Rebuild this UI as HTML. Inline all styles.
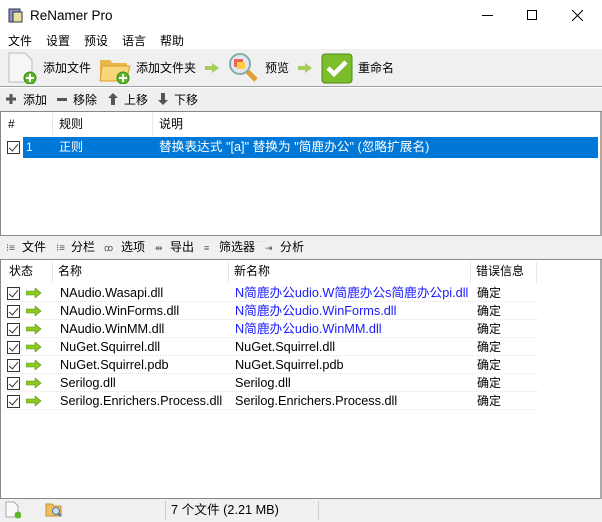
<!DOCTYPE html>
<html><head><meta charset="utf-8"><style>
*{margin:0;padding:0;box-sizing:border-box}
body{width:602px;height:522px;overflow:hidden;background:#fff;font-family:"Liberation Sans","Noto Sans CJK SC",sans-serif;font-size:12px;color:#000;position:relative}
.a{position:absolute;white-space:nowrap;line-height:15px}
.cb{position:absolute;width:13px;height:13px;border:1px solid #333;background:#fff}
.cb:after{content:"";position:absolute;left:3px;top:0px;width:4px;height:8px;border:solid #333;border-width:0 1.3px 1.3px 0;transform:rotate(40deg)}
.arr{position:absolute;width:16px;height:10px}
.row{position:absolute;left:4px;width:533px;height:18px;border-bottom:1px dotted #e4e4e4}
.blue{color:#1a1aff}
.l{font-size:12.7px}
</style></head><body>
<div class="a" style="left:0;top:0;width:602px;height:32px;background:#fff"></div>
<svg class="a" style="left:7px;top:6px" width="18" height="18"><rect x="2" y="3" width="11" height="13" fill="#8a8fc8" stroke="#334" /><rect x="6" y="6" width="9" height="10" fill="#e8e0a0" stroke="#333"/></svg>
<div class="a" style="left:30px;top:8px;font-size:13.5px">ReNamer Pro</div>
<div class="a" style="left:482px;top:15px;width:11px;height:1px;background:#000"></div>
<div class="a" style="left:527px;top:10px;width:10px;height:10px;border:1px solid #000"></div>
<svg class="a" style="left:572px;top:10px" width="11" height="11"><path d="M0 0L11 11M11 0L0 11" stroke="#000"/></svg>
<div class="a" style="left:8px;top:34px">文件</div>
<div class="a" style="left:46px;top:34px">设置</div>
<div class="a" style="left:84px;top:34px">预设</div>
<div class="a" style="left:122px;top:34px">语言</div>
<div class="a" style="left:160px;top:34px">帮助</div>
<div class="a" style="left:0;top:49px;width:602px;height:38px;background:#f0f0f0;border-bottom:1px solid #a0a0a0"></div>
<svg class="a" style="left:6px;top:52px" width="32" height="32"><path d="M3 1h16l7 7v22H3z" fill="#f6f6f6" stroke="#bbb"/><circle cx="24" cy="26" r="6" fill="#5cb82a" stroke="#3a8a18"/><path d="M24 22v8M20 26h8" stroke="#fff" stroke-width="2"/></svg>
<div class="a" style="left:43px;top:61px">添加文件</div>
<svg class="a" style="left:98px;top:52px" width="34" height="32"><path d="M2 8h10l3 3h14v18H2z" fill="#e9b84a"/><path d="M4 14h28l-4 15H2z" fill="#f8d67a" stroke="#d9a032"/><circle cx="25" cy="26" r="6" fill="#5cb82a" stroke="#3a8a18"/><path d="M25 22v8M21 26h8" stroke="#fff" stroke-width="2"/></svg>
<div class="a" style="left:136px;top:61px">添加文件夹</div>
<svg class="a" style="left:205px;top:63px" width="14" height="10"><path d="M0 3h7V0l7 5-7 5V7H0z" fill="#a6cc5a"/></svg>
<svg class="a" style="left:228px;top:52px" width="32" height="32"><path d="M18 18l10 10" stroke="#e0a030" stroke-width="5"/><circle cx="12" cy="12" r="10" fill="#dfe9f5" stroke="#8aa" stroke-width="2"/><rect x="6" y="7" width="9" height="8" fill="#e65"/><rect x="9" y="10" width="8" height="7" fill="#fc4"/></svg>
<div class="a" style="left:265px;top:61px">预览</div>
<svg class="a" style="left:298px;top:63px" width="14" height="10"><path d="M0 3h7V0l7 5-7 5V7H0z" fill="#a6cc5a"/></svg>
<svg class="a" style="left:321px;top:53px" width="32" height="31"><rect x="1" y="1" width="30" height="29" rx="3" fill="#7bbd2a" stroke="#4d8a12"/><path d="M7 15l6 6 12-12" stroke="#fff" stroke-width="4.5" fill="none"/></svg>
<div class="a" style="left:358px;top:61px">重命名</div>
<div class="a" style="left:0;top:88px;width:602px;height:24px;background:#efefef;border-bottom:1px solid #888"></div>
<svg class="a" style="left:6px;top:94px" width="10" height="10"><path d="M5 0v10M0 5h10" stroke="#555" stroke-width="3"/></svg>
<div class="a" style="left:23px;top:93px">添加</div>
<div class="a" style="left:57px;top:98px;width:10px;height:3px;background:#555"></div>
<div class="a" style="left:73px;top:93px">移除</div>
<svg class="a" style="left:108px;top:93px" width="10" height="12"><path d="M5 0l5 5H7v7H3V5H0z" fill="#555"/></svg>
<div class="a" style="left:124px;top:93px">上移</div>
<svg class="a" style="left:158px;top:93px" width="10" height="12"><path d="M5 12l5-5H7V0H3v7H0z" fill="#555"/></svg>
<div class="a" style="left:174px;top:93px">下移</div>
<div class="a" style="left:0;top:112px;width:602px;height:124px;border:1px solid #888;border-top:0;border-right:2px solid #aaa"></div>
<div class="a" style="left:8px;top:117px">#</div>
<div class="a" style="left:52px;top:113px;width:1px;height:22px;background:#e8e8e8"></div>
<div class="a" style="left:59px;top:117px">规则</div>
<div class="a" style="left:152px;top:113px;width:1px;height:22px;background:#e8e8e8"></div>
<div class="a" style="left:159px;top:117px">说明</div>
<div class="a" style="left:23px;top:137px;width:575px;height:21px;background:#0078d7"></div>
<div class="cb" style="left:7px;top:141px"></div>
<div class="a" style="left:26px;top:140px;color:#fff">1</div>
<div class="a" style="left:59px;top:140px;color:#fff">正则</div>
<div class="a l" style="left:159px;top:140px;color:#fff">替换表达式 "[a]" 替换为 "简鹿办公" (忽略扩展名)</div>
<div class="a" style="left:0;top:236px;width:602px;height:24px;background:#f0f0f0;border-bottom:1px solid #888"></div>
<div class="a" style="left:250px;top:234px;font-size:6px;color:#aaa;letter-spacing:1px">.......</div>
<div class="a" style="left:6px;top:241px;font-size:10px;color:#555">⁝≡</div>
<div class="a" style="left:22px;top:240px">文件</div>
<div class="a" style="left:56px;top:241px;font-size:10px;color:#555">⁝≡</div>
<div class="a" style="left:71px;top:240px">分栏</div>
<div class="a" style="left:104px;top:241px;font-size:9px;color:#555">ꝏ</div>
<div class="a" style="left:121px;top:240px">选项</div>
<div class="a" style="left:155px;top:241px;font-size:9px;color:#555">⇹</div>
<div class="a" style="left:170px;top:240px">导出</div>
<div class="a" style="left:204px;top:241px;font-size:9px;color:#555">≡</div>
<div class="a" style="left:219px;top:240px">筛选器</div>
<div class="a" style="left:265px;top:241px;font-size:9px;color:#555">⇥</div>
<div class="a" style="left:280px;top:240px">分析</div>
<div class="a" style="left:0;top:260px;width:602px;height:239px;border-left:1px solid #888;border-right:2px solid #aaa;border-bottom:1px solid #888"></div>
<div class="a" style="left:9px;top:264px">状态</div>
<div class="a" style="left:52px;top:262px;width:1px;height:21px;background:#e8e8e8"></div>
<div class="a" style="left:58px;top:264px">名称</div>
<div class="a" style="left:228px;top:262px;width:1px;height:21px;background:#e8e8e8"></div>
<div class="a" style="left:234px;top:264px">新名称</div>
<div class="a" style="left:470px;top:262px;width:1px;height:21px;background:#e8e8e8"></div>
<div class="a" style="left:476px;top:264px">错误信息</div>
<div class="a" style="left:536px;top:262px;width:1px;height:21px;background:#e8e8e8"></div>
<div class="row" style="top:284px"></div><div class="row" style="top:302px"></div><div class="row" style="top:320px"></div><div class="row" style="top:338px"></div><div class="row" style="top:356px"></div><div class="row" style="top:374px"></div><div class="row" style="top:392px"></div>
<div class="cb" style="left:7px;top:287px"></div><svg class="arr" style="left:26px;top:288px"><path d="M0 3h9V0l6 5-6 5V7H0z" fill="#8cc820" stroke="#5a9010" stroke-width=".6"/></svg>
<div class="a l" style="left:60px;top:286px">NAudio.Wasapi.dll</div><div class="a l blue" style="left:235px;top:286px">N简鹿办公udio.W简鹿办公s简鹿办公pi.dll</div><div class="a" style="left:477px;top:286px">确定</div>
<div class="cb" style="left:7px;top:305px"></div><svg class="arr" style="left:26px;top:306px"><path d="M0 3h9V0l6 5-6 5V7H0z" fill="#8cc820" stroke="#5a9010" stroke-width=".6"/></svg>
<div class="a l" style="left:60px;top:304px">NAudio.WinForms.dll</div><div class="a l blue" style="left:235px;top:304px">N简鹿办公udio.WinForms.dll</div><div class="a" style="left:477px;top:304px">确定</div>
<div class="cb" style="left:7px;top:323px"></div><svg class="arr" style="left:26px;top:324px"><path d="M0 3h9V0l6 5-6 5V7H0z" fill="#8cc820" stroke="#5a9010" stroke-width=".6"/></svg>
<div class="a l" style="left:60px;top:322px">NAudio.WinMM.dll</div><div class="a l blue" style="left:235px;top:322px">N简鹿办公udio.WinMM.dll</div><div class="a" style="left:477px;top:322px">确定</div>
<div class="cb" style="left:7px;top:341px"></div><svg class="arr" style="left:26px;top:342px"><path d="M0 3h9V0l6 5-6 5V7H0z" fill="#8cc820" stroke="#5a9010" stroke-width=".6"/></svg>
<div class="a l" style="left:60px;top:340px">NuGet.Squirrel.dll</div><div class="a l" style="left:235px;top:340px">NuGet.Squirrel.dll</div><div class="a" style="left:477px;top:340px">确定</div>
<div class="cb" style="left:7px;top:359px"></div><svg class="arr" style="left:26px;top:360px"><path d="M0 3h9V0l6 5-6 5V7H0z" fill="#8cc820" stroke="#5a9010" stroke-width=".6"/></svg>
<div class="a l" style="left:60px;top:358px">NuGet.Squirrel.pdb</div><div class="a l" style="left:235px;top:358px">NuGet.Squirrel.pdb</div><div class="a" style="left:477px;top:358px">确定</div>
<div class="cb" style="left:7px;top:377px"></div><svg class="arr" style="left:26px;top:378px"><path d="M0 3h9V0l6 5-6 5V7H0z" fill="#8cc820" stroke="#5a9010" stroke-width=".6"/></svg>
<div class="a l" style="left:60px;top:376px">Serilog.dll</div><div class="a l" style="left:235px;top:376px">Serilog.dll</div><div class="a" style="left:477px;top:376px">确定</div>
<div class="cb" style="left:7px;top:395px"></div><svg class="arr" style="left:26px;top:396px"><path d="M0 3h9V0l6 5-6 5V7H0z" fill="#8cc820" stroke="#5a9010" stroke-width=".6"/></svg>
<div class="a l" style="left:60px;top:394px">Serilog.Enrichers.Process.dll</div><div class="a l" style="left:235px;top:394px">Serilog.Enrichers.Process.dll</div><div class="a" style="left:477px;top:394px">确定</div>
<div class="a" style="left:0;top:499px;width:602px;height:23px;background:#f0f0f0"></div>
<svg class="a" style="left:5px;top:501px" width="16" height="18"><path d="M1 1h8l4 4v11H1z" fill="#fafafa" stroke="#aaa"/><circle cx="13" cy="14" r="3.5" fill="#5cb82a"/></svg>
<svg class="a" style="left:45px;top:501px" width="18" height="17"><path d="M1 3h6l2 2h7v10H1z" fill="#f0c060" stroke="#c89030"/><circle cx="11" cy="10" r="3.5" fill="#cde" stroke="#57a"/><path d="M13 12l3 3" stroke="#57a" stroke-width="2"/></svg>
<div class="a" style="left:165px;top:501px;width:1px;height:19px;background:#ccc"></div>
<div class="a l" style="left:171px;top:503px">7 个文件 (2.21 MB)</div>
<div class="a" style="left:318px;top:501px;width:1px;height:19px;background:#ccc"></div>
</body></html>
